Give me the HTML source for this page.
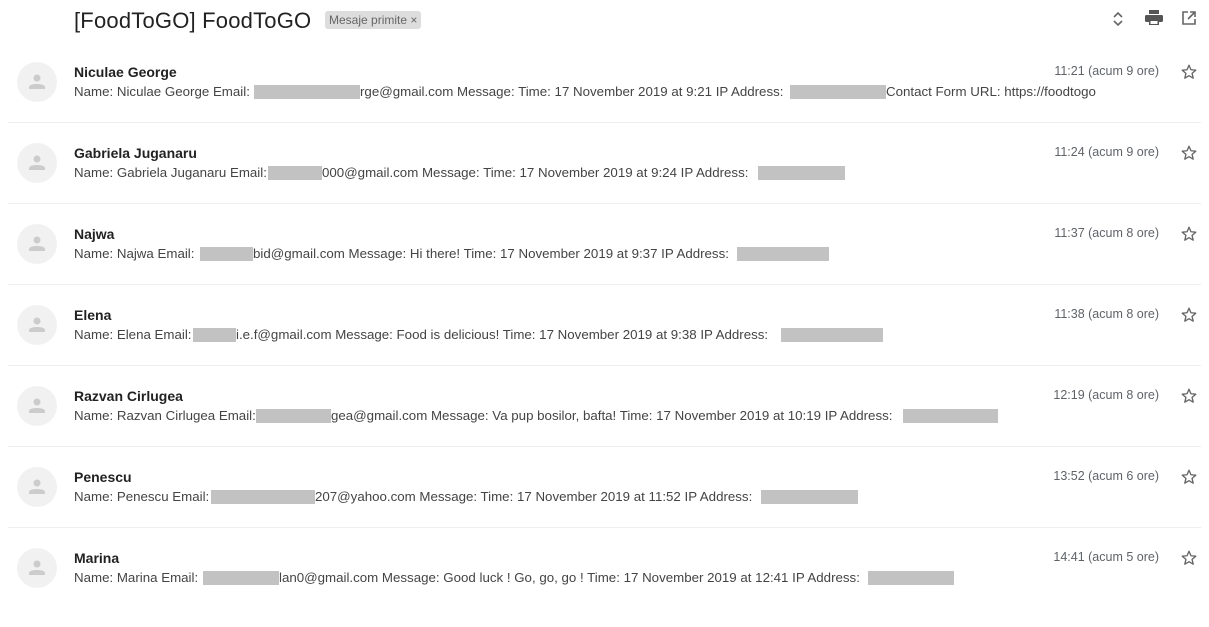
<!DOCTYPE html><html><head><meta charset="utf-8"><style>
body{margin:0;width:1209px;height:598px;background:#fff;font-family:"Liberation Sans",Arial,sans-serif;position:relative;overflow:hidden}
.a{position:absolute;white-space:nowrap}
.t{font-size:22px;color:#222;left:74px;top:8px;letter-spacing:0.2px}
.lab{left:325px;top:11px;background:#ddd;color:#666;font-size:12px;padding:2px 4px;border-radius:3px}
.row{position:absolute;left:0;width:1209px;height:81px}
.av{position:absolute;left:17px;top:2px;width:40px;height:40px;border-radius:50%;background:#f1f1f1}
.n{font-size:14px;font-weight:bold;color:#222;top:4px}
.b{font-size:13.3px;color:#444;top:24px;overflow:hidden}
.g{position:absolute;background:#c2c2c2;top:25px;height:14px}
.tm{font-size:12.5px;color:#5f6368;right:50px;top:4px}
.hr{position:absolute;left:8px;right:8px;top:62px;border-top:1px solid #eee}
</style></head><body>
<div class="a t">[FoodToGO] FoodToGO</div>
<div class="a lab">Mesaje primite ×</div>
<svg class="a" style="left:1110px;top:10px" width="16" height="18" viewBox="0 0 16 18"><path d="M4 7l4-4 4 4M4 11l4 4 4-4" fill="none" stroke="#666" stroke-width="1.6"/></svg>
<svg class="a" style="left:1145px;top:10px" width="18" height="16" viewBox="0 0 18 16"><rect x="4" y="0" width="10" height="4" fill="#555"/><rect x="0" y="5" width="18" height="7" rx="1.5" fill="#555"/><rect x="4" y="10" width="10" height="5" fill="#555"/><rect x="5.5" y="11" width="7" height="3" fill="#fff"/></svg>
<svg class="a" style="left:1182px;top:11px" width="14" height="14" viewBox="0 0 14 14"><path d="M6 1H1v12h12V8M8 1h5v5M13 1L6 8" fill="none" stroke="#666" stroke-width="1.6"/></svg>
<div id="rows"></div>
<script>
var R=[
["Niculae George","Name: Niculae George Email:",254,360,"rge@gmail.com Message: Time: 17 November 2019 at 9:21 IP Address:",790,886," Contact Form URL: https://foodtogo","11:21 (acum 9 ore)"],
["Gabriela Juganaru","Name: Gabriela Juganaru Email:",268,322,"000@gmail.com Message: Time: 17 November 2019 at 9:24 IP Address:",758,845,"","11:24 (acum 9 ore)"],
["Najwa","Name: Najwa Email:",200,253,"bid@gmail.com Message: Hi there! Time: 17 November 2019 at 9:37 IP Address:",737,829,"","11:37 (acum 8 ore)"],
["Elena","Name: Elena Email:",193,236,"i.e.f@gmail.com Message: Food is delicious! Time: 17 November 2019 at 9:38 IP Address:",781,883,"","11:38 (acum 8 ore)"],
["Razvan Cirlugea","Name: Razvan Cirlugea Email:",256,331,"gea@gmail.com Message: Va pup bosilor, bafta! Time: 17 November 2019 at 10:19 IP Address:",903,998,"","12:19 (acum 8 ore)"],
["Penescu","Name: Penescu Email:",211,315,"207@yahoo.com Message: Time: 17 November 2019 at 11:52 IP Address:",761,858,"","13:52 (acum 6 ore)"],
["Marina","Name: Marina Email:",203,279,"lan0@gmail.com Message: Good luck ! Go, go, go ! Time: 17 November 2019 at 12:41 IP Address:",868,954,"","14:41 (acum 5 ore)"]];
var h="";
R.forEach(function(r,i){
h+='<div class="row" style="top:'+(60+81*i)+'px"><div class="av"><svg width="40" height="40" viewBox="0 0 40 40"><circle cx="20" cy="16" r="3.5" fill="#ccc"/><path d="M12 25c0-4 16-4 16 0v2H12z" fill="#ccc"/></svg></div>'+
'<div class="a n" style="left:74px">'+r[0]+'</div>'+
'<div class="a b" style="left:74px;width:'+(r[2]-74)+'px">'+r[1]+'</div>'+
'<div class="g" style="left:'+r[2]+'px;width:'+(r[3]-r[2])+'px"></div>'+
'<div class="a b" style="left:'+r[3]+'px;width:'+(r[5]-r[3])+'px">'+r[4]+'</div>'+
'<div class="g" style="left:'+r[5]+'px;width:'+(r[6]-r[5])+'px"></div>'+
'<div class="a b" style="left:'+r[6]+'px">'+r[7]+'</div>'+
'<div class="a tm">'+r[8]+'</div>'+
'<svg class="a" style="left:1180px;top:3px" width="18" height="18" viewBox="0 0 24 24"><path d="M12 3l2.6 6 6.4.6-4.9 4.3 1.5 6.3L12 16.9 6.4 20.2l1.5-6.3L3 9.6l6.4-.6z" fill="none" stroke="#666" stroke-width="1.8" stroke-linejoin="round"/></svg>'+
(i<6?'<div class="hr"></div>':'')+'</div>';});
document.getElementById("rows").innerHTML=h;
</script>
</body></html>
